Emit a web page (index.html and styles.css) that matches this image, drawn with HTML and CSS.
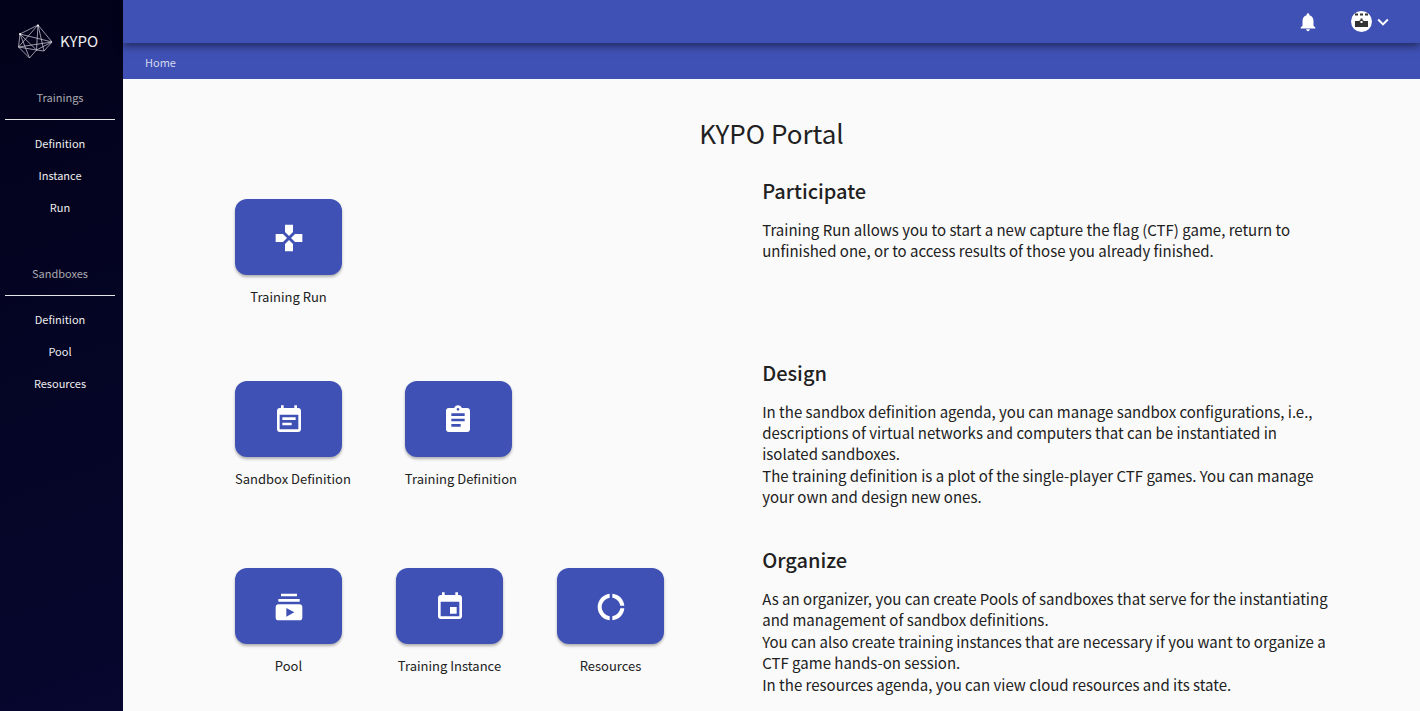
FILE: index.html
```html
<!DOCTYPE html>
<html lang="en">
<head>
<meta charset="utf-8">
<title>KYPO Portal</title>
<link rel="stylesheet" href="styles.css">
</head>
<body>
<div class="app">
  <aside class="sidebar">
    <a class="logo" href="#">
      <svg class="logo-mark" viewBox="0 0 36 36" aria-hidden="true">
        <path d="M21 2 3 11 1.500 24 12.500 35 19.500 27 27 28 35 19ZM21 2 1.500 24M21 2 19.500 27M21 2 27 28M3 11 35 19M3 11 19.500 27M3 11 12.500 35M1.500 24 35 19M1.500 24 19.500 27M19.500 27 35 19"/>
        <circle cx="21" cy="2.500" r="1"/><circle cx="3" cy="11" r="1"/>
      </svg>
      <span>KYPO</span>
    </a>
    <nav class="menu">
      <section class="menu-group">
        <h2 class="menu-title">Trainings</h2>
        <a class="menu-link" href="#">Definition</a>
        <a class="menu-link" href="#">Instance</a>
        <a class="menu-link" href="#">Run</a>
      </section>
      <section class="menu-group">
        <h2 class="menu-title">Sandboxes</h2>
        <a class="menu-link" href="#">Definition</a>
        <a class="menu-link" href="#">Pool</a>
        <a class="menu-link" href="#">Resources</a>
      </section>
    </nav>
  </aside>
  <div class="page">
    <header class="toolbar">
      <button class="tool-button" type="button" aria-label="Notifications">
        <svg class="tool-icon" viewBox="0 0 24 24"><path d="M12 22c1.100 0 2-.9 2-2h-4c0 1.100.89 2 2 2zm6-6v-5c0-3.070-1.640-5.640-4.500-6.320V4c0-.83-.67-1.500-1.500-1.500s-1.500.67-1.500 1.500v.68C7.630 5.360 6 7.920 6 11v5l-2 2v1h16v-1l-2-2z"/></svg>
      </button>
      <button class="tool-button" type="button" aria-label="User menu">
        <svg class="avatar" viewBox="0 0 21 21">
          <circle cx="10.500" cy="10.500" r="10.500" fill="#fff"/>
          <path fill="#333" d="M4 2.500h3v2H4zM9 2.500h3v2H9zM14 2.500h3v2h-3zM4 10h4l1.500-1V7.500h2V9l1.500 1h4v6H4z"/>
          <path fill="#fff" d="M9.500 10h2v2h-2z"/>
        </svg>
        <svg class="tool-icon" viewBox="0 0 24 24"><path d="M16.590 8.590 12 13.170 7.410 8.590 6 10l6 6 6-6z"/></svg>
      </button>
    </header>
    <nav class="breadcrumb" aria-label="Breadcrumb"><a href="#">Home</a></nav>
    <main class="content">
      <h1 class="title">KYPO Portal</h1>
      <section class="agenda">
        <div class="tiles">
          <div class="tile">
            <button class="tile-button" type="button" aria-labelledby="run"><svg class="tile-icon" viewBox="0 0 24 24"><path d="M15 7.500V2H9v5.500l3 3 3-3zM7.500 9H2v6h5.500l3-3-3-3zM9 16.500V22h6v-5.500l-3-3-3 3zM16.500 9l-3 3 3 3H22V9h-5.500z"/></svg></button>
            <span class="tile-label" id="run">Training Run</span>
          </div>
        </div>
        <div class="about">
          <h2 class="heading">Participate</h2>
          <p>Training Run allows you to start a new capture the flag (CTF) game, return to unfinished one, or to access results of those you already finished.</p>
        </div>
      </section>
      <section class="agenda">
        <div class="tiles">
          <div class="tile">
            <button class="tile-button" type="button" aria-labelledby="sandbox-def"><svg class="tile-icon" viewBox="0 0 24 24"><path d="M17 10H7v2h10v-2zm2-7h-1V1h-2v2H8V1H6v2H5c-1.110 0-1.990.9-1.990 2L3 19c0 1.100.89 2 2 2h14c1.100 0 2-.9 2-2V5c0-1.100-.9-2-2-2zm0 16H5V8h14v11zm-5-5H7v2h7v-2z"/></svg></button>
            <span class="tile-label" id="sandbox-def">Sandbox Definition</span>
          </div>
          <div class="tile">
            <button class="tile-button" type="button" aria-labelledby="training-def"><svg class="tile-icon" viewBox="0 0 24 24"><path d="M19 3h-4.180C14.400 1.840 13.300 1 12 1c-1.300 0-2.400.84-2.820 2H5c-1.100 0-2 .9-2 2v14c0 1.100.9 2 2 2h14c1.100 0 2-.9 2-2V5c0-1.100-.9-2-2-2zm-7 0c.55 0 1 .45 1 1s-.45 1-1 1-1-.45-1-1 .45-1 1-1zm2 14H7v-2h7v2zm3-4H7v-2h10v2zm0-4H7V7h10v2z"/></svg></button>
            <span class="tile-label" id="training-def">Training Definition</span>
          </div>
        </div>
        <div class="about">
          <h2 class="heading">Design</h2>
          <p>In the sandbox definition agenda, you can manage sandbox configurations, i.e., descriptions of virtual networks and computers that can be instantiated in isolated sandboxes.</p>
          <p>The training definition is a plot of the single-player CTF games. You can manage your own and design new ones.</p>
        </div>
      </section>
      <section class="agenda">
        <div class="tiles">
          <div class="tile">
            <button class="tile-button" type="button" aria-labelledby="pool"><svg class="tile-icon" viewBox="0 0 24 24"><path d="M20 8H4V6h16v2zm-2-6H6v2h12V2zm4 10v8c0 1.100-.9 2-2 2H4c-1.100 0-2-.9-2-2v-8c0-1.100.9-2 2-2h16c1.100 0 2 .9 2 2zm-6 4-6-3.270v6.530L16 16z"/></svg></button>
            <span class="tile-label" id="pool">Pool</span>
          </div>
          <div class="tile">
            <button class="tile-button" type="button" aria-labelledby="instance"><svg class="tile-icon" viewBox="0 0 24 24"><path d="M17 12h-5v5h5v-5zM16 1v2H8V1H6v2H5c-1.110 0-1.990.9-1.990 2L3 19c0 1.100.89 2 2 2h14c1.100 0 2-.9 2-2V5c0-1.100-.9-2-2-2h-1V1h-2zm3 18H5V8h14v11z"/></svg></button>
            <span class="tile-label" id="instance">Training Instance</span>
          </div>
          <div class="tile">
            <button class="tile-button" type="button" aria-labelledby="resources"><svg class="tile-icon" viewBox="0 0 24 24"><path d="M11 5.080V2c-5 .5-9 4.810-9 10s4 9.500 9 10v-3.080c-3-.48-6-3.400-6-6.920s3-6.440 6-6.920zM18.970 11H22c-.47-5-4-8.530-9-9v3.080C16 5.510 18.540 8 18.970 11zM13 18.920V22c5-.47 8.530-4 9-9h-3.030c-.43 3-2.970 5.490-5.970 5.920z"/></svg></button>
            <span class="tile-label" id="resources">Resources</span>
          </div>
        </div>
        <div class="about">
          <h2 class="heading">Organize</h2>
          <p>As an organizer, you can create Pools of sandboxes that serve for the instantiating and management of sandbox definitions.</p>
          <p>You can also create training instances that are necessary if you want to organize a CTF game hands-on session.</p>
          <p>In the resources agenda, you can view cloud resources and its state.</p>
        </div>
      </section>
    </main>
  </div>
</div>
</body>
</html>
```
FILE: styles.css
```css
* {
  box-sizing: border-box;
}

body {
  margin: 0;
  background: #fafafa;
  color: #212121;
  font-family: "Noto Sans CJK SC", "Noto Sans", sans-serif;
  font-size: 15px;
  line-height: 21px;
}

h1, h2, p {
  margin: 0;
}

a {
  color: inherit;
  text-decoration: none;
}

button {
  padding: 0;
  border: 0;
  font: inherit;
  cursor: pointer;
}

svg {
  display: block;
  fill: #fff;
}

.app {
  display: flex;
  min-height: 100vh;
}

.sidebar {
  flex: none;
  width: 123px;
  padding: 0 8px 0 5px;
  background: linear-gradient(160deg, #02021a, #070730);
  color: #eee;
  text-align: center;
}

.logo {
  display: flex;
  align-items: center;
  gap: 7px;
  height: 81px;
  padding-left: 12px;
}

.logo-mark {
  width: 36px;
  height: 36px;
  fill: #fff;
}

.logo-mark path {
  fill: none;
  stroke: #d4d4dc;
  stroke-width: 0.7;
}

.menu {
  display: flex;
  flex-direction: column;
  gap: 34px;
  font-size: 11px;
  line-height: 32px;
}

.menu-title {
  margin-bottom: 7px;
  padding-bottom: 6px;
  border-bottom: 1px solid #e6e6e6;
  color: #a9a9ae;
  font-size: 11px;
  font-weight: 400;
}

.menu-link {
  display: block;
}

.page {
  flex: 1;
  min-width: 0;
}

.toolbar {
  position: relative;
  display: flex;
  align-items: center;
  justify-content: flex-end;
  gap: 32px;
  height: 43px;
  padding-right: 26px;
  background: #3f51b5;
  box-shadow: 0 3px 8px rgba(0, 0, 0, 0.5);
}

.tool-button {
  display: flex;
  align-items: center;
  background: none;
}

.tool-icon {
  width: 22px;
  height: 22px;
}

.avatar {
  width: 21px;
  height: 21px;
}

.breadcrumb {
  padding: 9px 22px 6px;
  background: #3f51b5;
  color: #d5d9ef;
  font-size: 11px;
}

.content {
  padding: 39px 90px 16px 112px;
}

.title {
  margin: 0 -90px 30px -112px;
  font-size: 26px;
  font-weight: 400;
  line-height: 30px;
  text-align: center;
}

.agenda {
  display: grid;
  grid-template-columns: 13fr 14fr;
  min-height: 182px;
  padding-bottom: 40px;
}

.agenda:last-child {
  padding-bottom: 0;
}

.tiles {
  display: flex;
  align-items: flex-start;
  gap: 54px;
  padding-top: 21px;
}

.tile {
  display: flex;
  flex-direction: column;
  gap: 11px;
}

.tile-button {
  display: grid;
  place-items: center;
  width: 107px;
  height: 76px;
  padding-top: 2px;
  border-radius: 12px;
  background: #3f51b5;
  box-shadow: 0 2px 3px rgba(0, 0, 0, 0.3);
}

.tile-icon {
  width: 32px;
  height: 32px;
}

.tile-label {
  font-size: 13px;
  text-align: center;
}

.about {
  display: flex;
  flex-direction: column;
  gap: 1px;
}

.heading {
  margin-bottom: 14px;
  font-size: 20px;
  font-weight: 500;
  line-height: 26px;
}
```
